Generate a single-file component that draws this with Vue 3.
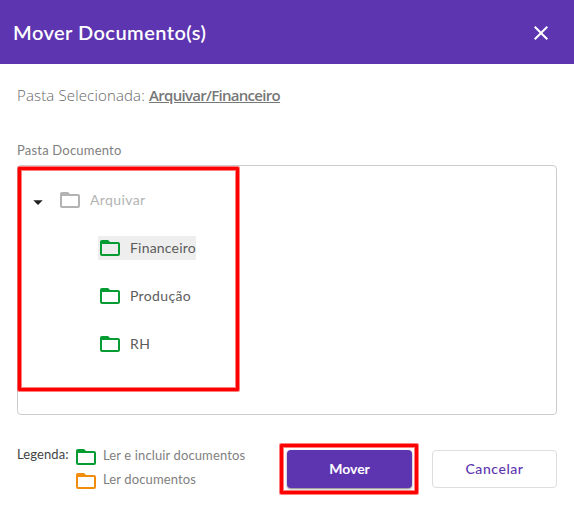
<script setup>
const folderPath =
  'M20,18H4V8H20M20,6H12L10,4H4C2.89,4 2,4.89 2,6V18A2,2 0 0,0 4,20H20A2,2 0 0,0 22,18V8C22,6.89 21.1,6 20,6Z'

const folders = [
  { name: 'Financeiro', kind: 'financeiro', selected: true },
  { name: 'Produção', kind: 'producao', selected: false },
  { name: 'RH', kind: 'rh', selected: false },
]
</script>

<template>
  <div class="dialog">
    <header class="header">
      <h1 class="title">Mover Documento(s)</h1>
      <button class="close" aria-label="Fechar">
        <svg width="24" height="24" viewBox="0 0 24 24">
          <path fill="currentColor" d="M19,6.41L17.59,5L12,10.59L6.41,5L5,6.41L10.59,12L5,17.59L6.41,19L12,13.41L17.59,19L19,17.59L13.41,12L19,6.41Z" />
        </svg>
      </button>
    </header>

    <main class="content">
      <p class="selected-path">
        <span class="path-label">Pasta Selecionada:</span>
        <strong class="path-value">Arquivar/Financeiro</strong>
      </p>
      <label class="field-label"><span>Pasta Documento</span></label>

      <section class="tree-box">
        <div class="tree">
          <div class="row root">
            <svg class="caret" width="24" height="24" viewBox="0 0 24 24"><path fill="currentColor" d="M7.3,10.2H16.7L12,15Z" /></svg>
            <svg class="folder" width="24" height="24" viewBox="0 0 24 24"><path fill="currentColor" :d="folderPath" /></svg>
            <span class="name arquivar">Arquivar</span>
          </div>
          <div v-for="f in folders" :key="f.name" class="row child">
            <div class="node" :class="{ active: f.selected }">
              <svg class="folder green" width="24" height="24" viewBox="0 0 24 24"><path fill="currentColor" :d="folderPath" /></svg>
              <span class="name" :class="f.kind">{{ f.name }}</span>
            </div>
          </div>
        </div>
      </section>

      <footer class="footer">
        <span class="legend-title">Legenda:</span>
        <div class="legend">
          <div class="legend-row">
            <svg class="folder green" width="24" height="24" viewBox="0 0 24 24"><path fill="currentColor" :d="folderPath" /></svg>
            <span class="legend-text">Ler e incluir documentos</span>
          </div>
          <div class="legend-row">
            <svg class="folder orange" width="24" height="24" viewBox="0 0 24 24"><path fill="currentColor" :d="folderPath" /></svg>
            <span class="legend-text">Ler documentos</span>
          </div>
        </div>
        <div class="highlight">
          <button class="btn primary">Mover</button>
        </div>
        <button class="btn secondary">Cancelar</button>
      </footer>
    </main>
  </div>
</template>

<style>
body {
  margin: 0;
  background: #fff;
}
</style>

<style scoped>
.dialog {
  box-sizing: border-box;
  width: 574px;
  height: 508px;
  background: #fff;
  font-family: Lato, sans-serif;
  overflow: hidden;
  white-space: nowrap;
}
.header {
  box-sizing: border-box;
  display: flex;
  align-items: center;
  justify-content: space-between;
  height: 64px;
  padding: 2px 21px 0 13px;
  background: #5e35b1;
  color: #fff;
}
.title {
  margin: 0;
  padding-bottom: 3px;
  font-size: 20px;
  line-height: 28px;
  font-weight: 600;
  letter-spacing: 0.45px;
}
.close {
  display: flex;
  padding: 0;
  border: 0;
  background: none;
  color: #fff;
}
.content {
  padding: 0 17px;
}
.selected-path {
  display: flex;
  gap: 4px;
  margin: 0;
  padding-top: 19px;
  height: 25px;
  line-height: 24px;
  font-family: 'Open Sans', sans-serif;
  font-size: 15px;
  font-weight: 300;
  color: #666;
}
.path-label {
  width: 128px;
  letter-spacing: 0.15px;
}
.path-value {
  font-weight: 600;
  letter-spacing: -0.7px;
  color: #777;
  text-decoration: underline;
}
.field-label {
  display: block;
  height: 21px;
  margin-top: 32px;
  font-size: 13px;
  line-height: 20px;
  letter-spacing: 0.2px;
  color: #808080;
}
.tree-box {
  box-sizing: border-box;
  height: 250px;
  margin-top: 4px;
  padding-top: 1px;
  border: 1px solid #ccc;
  border-radius: 4px;
}
.tree {
  box-sizing: border-box;
  width: 221px;
  height: 224px;
  padding-top: 6px;
  border: 3px solid #f00;
  border-radius: 1px;
  box-shadow: 0 0 0 1px rgba(255, 0, 0, 0.5), inset 0 0 0 1px rgba(255, 0, 0, 0.5);
}
.row {
  display: flex;
  align-items: center;
  height: 48px;
  font-size: 14px;
  color: #5c5c5c;
}
.root {
  padding-left: 5px;
  color: #b3b3b3;
}
.caret {
  margin: 3px 8px 0 0;
  color: #212121;
}
.child {
  padding-left: 77px;
}
.node {
  display: flex;
  align-items: center;
  height: 24px;
}
.active {
  width: 98px;
  background: #eee;
}
.folder {
  flex: none;
}
.green {
  color: #079b34;
}
.orange {
  color: #f28c0c;
}
.name {
  margin-left: 8px;
  padding-bottom: 2px;
}
.arquivar {
  letter-spacing: 0.4px;
}
.financeiro {
  letter-spacing: 0.2px;
}
.producao {
  letter-spacing: 0.35px;
}
.rh {
  letter-spacing: 0.6px;
}
.footer {
  display: flex;
  align-items: flex-start;
  height: 52px;
  margin-top: 28px;
}
.legend-title {
  width: 57px;
  margin-top: 1px;
  font-size: 13px;
  line-height: 20px;
  letter-spacing: 0.1px;
  color: #444;
}
.legend {
  width: 206px;
  padding-top: 2px;
}
.legend-row {
  display: flex;
  height: 24px;
  font-size: 13px;
  line-height: 21px;
  letter-spacing: 0.12px;
  color: #808080;
}
.legend-text {
  margin-left: 5px;
}
.highlight {
  box-sizing: border-box;
  width: 138px;
  height: 50px;
  margin-top: 1px;
  padding: 3px 3px 3px 4px;
  border: 3px solid #f00;
  border-radius: 1px;
  box-shadow: 0 0 0 1px rgba(255, 0, 0, 0.5), inset 0 0 0 1px rgba(255, 0, 0, 0.5);
}
.btn {
  box-sizing: border-box;
  width: 125px;
  height: 38px;
  padding: 0 0 2px;
  border-radius: 4px;
  font-family: Lato, sans-serif;
  font-size: 14px;
}
.primary {
  display: block;
  border: 0;
  background: #5e35b1;
  color: #fff;
  font-weight: 700;
  box-shadow: 0 1px 2px rgba(0, 0, 0, 0.5);
}
.secondary {
  margin: 7px 0 0 14px;
  border: 1px solid #ddd;
  background: #fff;
  color: #5e35b1;
  font-weight: 500;
  letter-spacing: 0.55px;
}
</style>
